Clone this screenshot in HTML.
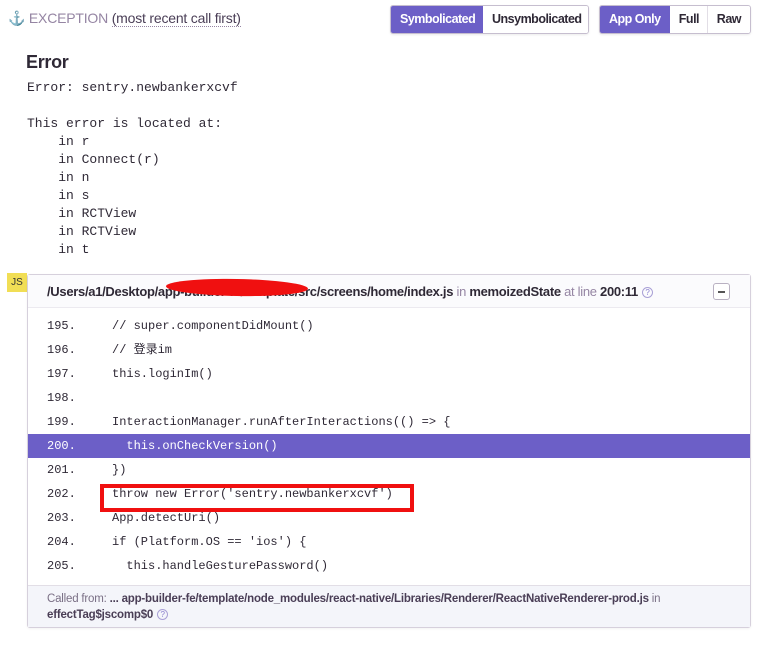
<!DOCTYPE html>
<html><head><meta charset="utf-8"><style>
*{margin:0;padding:0;box-sizing:border-box}
body{width:773px;height:648px;background:#fff;font-family:"Liberation Sans",sans-serif;color:#2f2936;position:relative;overflow:hidden}
.abs{position:absolute}
.hdr{left:8px;top:10px;font-size:14px;color:#9585a3;letter-spacing:-0.2px}
.hdr span{color:#4a3e56;border-bottom:1px dotted #9585a3}
.btns{top:5px;height:29px;display:flex;border:1px solid #c6becf;border-radius:3px;overflow:hidden;font-size:12.5px;font-weight:bold;box-shadow:0 1px 2px rgba(0,0,0,.08);letter-spacing:-0.5px}
.btns div{padding:0 9px;line-height:27px;color:#2f2936;background:#fff;border-left:1px solid #e2dee6}
.btns div.on{background:#6c5fc7;color:#fff;border-left:none}
h3{position:absolute;left:26px;top:52px;font-size:18px;font-weight:bold;color:#2f2936;letter-spacing:-0.3px}
pre{position:absolute;left:27px;top:79px;font-family:"Liberation Mono",monospace;font-size:13px;line-height:18px;color:#2f2936}
.frame{left:27px;top:274px;width:724px;height:354px;border:1px solid #d6d0dc;border-radius:3px;box-shadow:0 1px 2px rgba(0,0,0,.05)}
.fh{position:absolute;left:0;top:0;right:0;height:33px;background:#fbfbfd;border-bottom:1px solid #eceaf0;font-size:13px;letter-spacing:-0.3px;line-height:33px;padding-left:19px;color:#2f2936;font-weight:bold}
.fh i{font-style:normal;font-weight:normal;color:#9585a3}
.code{position:absolute;left:0;right:0;top:39px;font-family:"Liberation Mono",monospace;font-size:12px;color:#2f2936}
.ln{height:24px;line-height:24px;white-space:pre;position:relative}
.ln b{font-weight:normal;display:inline-block;width:84px;padding-left:19px}
.ln.hl{background:#6c5fc7;color:#fff}
.ft{position:absolute;left:0;right:0;bottom:0;height:42px;background:#f4f5fa;border-top:1px solid #e2dee6;font-size:11.5px;letter-spacing:-0.2px;padding:5px 0 0 19px;line-height:16px;color:#4a3e56;font-weight:bold}
.ft i{font-style:normal;font-weight:normal;color:#7a6f85}
.q{display:inline-block;width:11px;height:11px;border:1px solid #a9a0d6;border-radius:50%;font-size:8px;line-height:9px;text-align:center;color:#8a7fcf;font-weight:normal;vertical-align:middle;margin-left:4px}
</style></head><body>
<div class="abs hdr">⚓ EXCEPTION <span>(most recent call first)</span></div>
<div class="abs btns" style="left:390px;width:199px"><div class="on" style="width:92px">Symbolicated</div><div style="border-left:none;flex:1">Unsymbolicated</div></div>
<div class="abs btns" style="left:599px;width:152px"><div class="on" style="width:71px">App Only</div><div style="border-left:none;width:37px">Full</div><div style="flex:1">Raw</div></div>
<h3>Error</h3>
<pre>Error: sentry.newbankerxcvf

This error is located at:
    in r
    in Connect(r)
    in n
    in s
    in RCTView
    in RCTView
    in t</pre>
<div class="abs" style="left:7px;top:273px;width:20px;height:19px;background:#f1de55;font-size:10px;line-height:19px;text-align:center;color:#333">JS</div>
<div class="abs frame">
<div class="fh">/Users/a1/Desktop/app-builder-fe/template/src/screens/home/index.js <i>in</i> memoizedState <i>at line</i> 200:11<span class="q">?</span>
<div style="position:absolute;right:20px;top:8px;width:17px;height:17px;border:1px solid #b9b1c2;border-radius:3px;background:#fff"><div style="position:absolute;left:4px;top:7px;width:7px;height:1.5px;background:#555"></div></div></div>
<div class="abs" style="left:138px;top:4px;width:142px;height:17px;background:#f01010;border-radius:50%;transform:rotate(1deg)"></div>
<div class="code">
<div class="ln"><b>195.</b>// super.componentDidMount()</div>
<div class="ln"><b>196.</b>// 登录im</div>
<div class="ln"><b>197.</b>this.loginIm()</div>
<div class="ln"><b>198.</b></div>
<div class="ln"><b>199.</b>InteractionManager.runAfterInteractions(() =&gt; {</div>
<div class="ln hl"><b>200.</b>  this.onCheckVersion()</div>
<div class="ln"><b>201.</b>})</div>
<div class="ln"><b>202.</b>throw new Error('sentry.newbankerxcvf')</div>
<div class="ln"><b>203.</b>App.detectUri()</div>
<div class="ln"><b>204.</b>if (Platform.OS == 'ios') {</div>
<div class="ln"><b>205.</b>  this.handleGesturePassword()</div>
</div>
<div class="ft"><i>Called from:</i> ... app-builder-fe/template/node_modules/react-native/Libraries/Renderer/ReactNativeRenderer-prod.js <i>in</i><br>effectTag$jscomp$0<span class="q">?</span></div>
</div>
<div class="abs" style="left:100px;top:484px;width:314px;height:28px;border:4px solid #f01010"></div>
</body></html>
